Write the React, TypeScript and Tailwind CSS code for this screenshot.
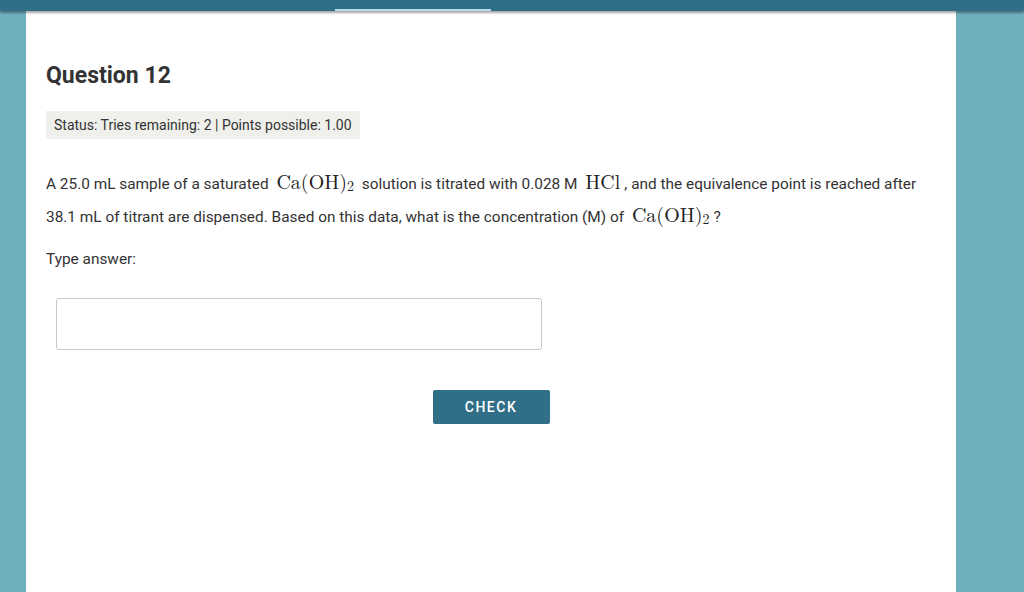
import React from "react";

const serif = "font-['Latin_Modern_Roman','Liberation_Serif','DejaVu_Serif',serif]";

function Chem({ base, sub }: { base: string; sub?: string }): React.JSX.Element {
	return (
		<span className={`${serif} mx-[4px] text-[20px] leading-none text-[#222]`}>
			{base}
			{sub && <span className="relative top-[2px] text-[14px] leading-none">{sub}</span>}
		</span>
	);
}

export default function App(): React.JSX.Element {
	return (
		<div className="flex h-[592px] w-[1024px] flex-col overflow-hidden bg-[#6fb0be] font-['Roboto',sans-serif] text-[#333]">
			<div className="relative h-[11px] shrink-0 bg-[#316e88] shadow-[0_2px_2px_rgba(0,0,0,0.35)]">
				<div className="absolute bottom-[0px] left-[335px] h-[2px] w-[156px] bg-[#b6dcec]" />
			</div>
			<div className="flex flex-1">
				<div className="w-[26px] shrink-0" />
				<main className="w-[930px] shrink-0 bg-white px-5 pt-[51px]">
					<h1 className="text-[23px] font-bold leading-7 text-[#333]">Question 12</h1>
					<div className="mt-[21px] inline-flex h-[28px] items-center bg-[#efefeb] px-[8px] text-[14px] leading-[18px] text-[#333]">
						Status: Tries remaining: 2 | Points possible: 1.00
					</div>
					<p className="mt-[29px] text-[15.4px] leading-[33px] text-[#333]">
						A 25.0 mL sample of a saturated <Chem base="Ca(OH)" sub="2" /> solution is titrated with 0.028 M{" "}
						<Chem base="HCl" />, and the equivalence point is reached after
						<br />
						38.1 mL of titrant are dispensed. Based on this data, what is the concentration (M) of{" "}
						<Chem base="Ca(OH)" sub="2" />?
					</p>
					<p className="mt-[15px] text-[15.4px] leading-5 text-[#333]">Type answer:</p>
					<input
						type="text"
						className="mt-[29px] ml-[10px] block h-[52px] w-[486px] rounded-[3px] border border-[#c8c8c8] bg-white px-3 outline-none"
					/>
					<div className="mt-[40px] flex justify-center">
						<button className="h-[34px] w-[117px] rounded-[2px] bg-[#316e88] text-[14px] font-medium tracking-[1.5px] text-white">
							CHECK
						</button>
					</div>
				</main>
			</div>
		</div>
	);
}
